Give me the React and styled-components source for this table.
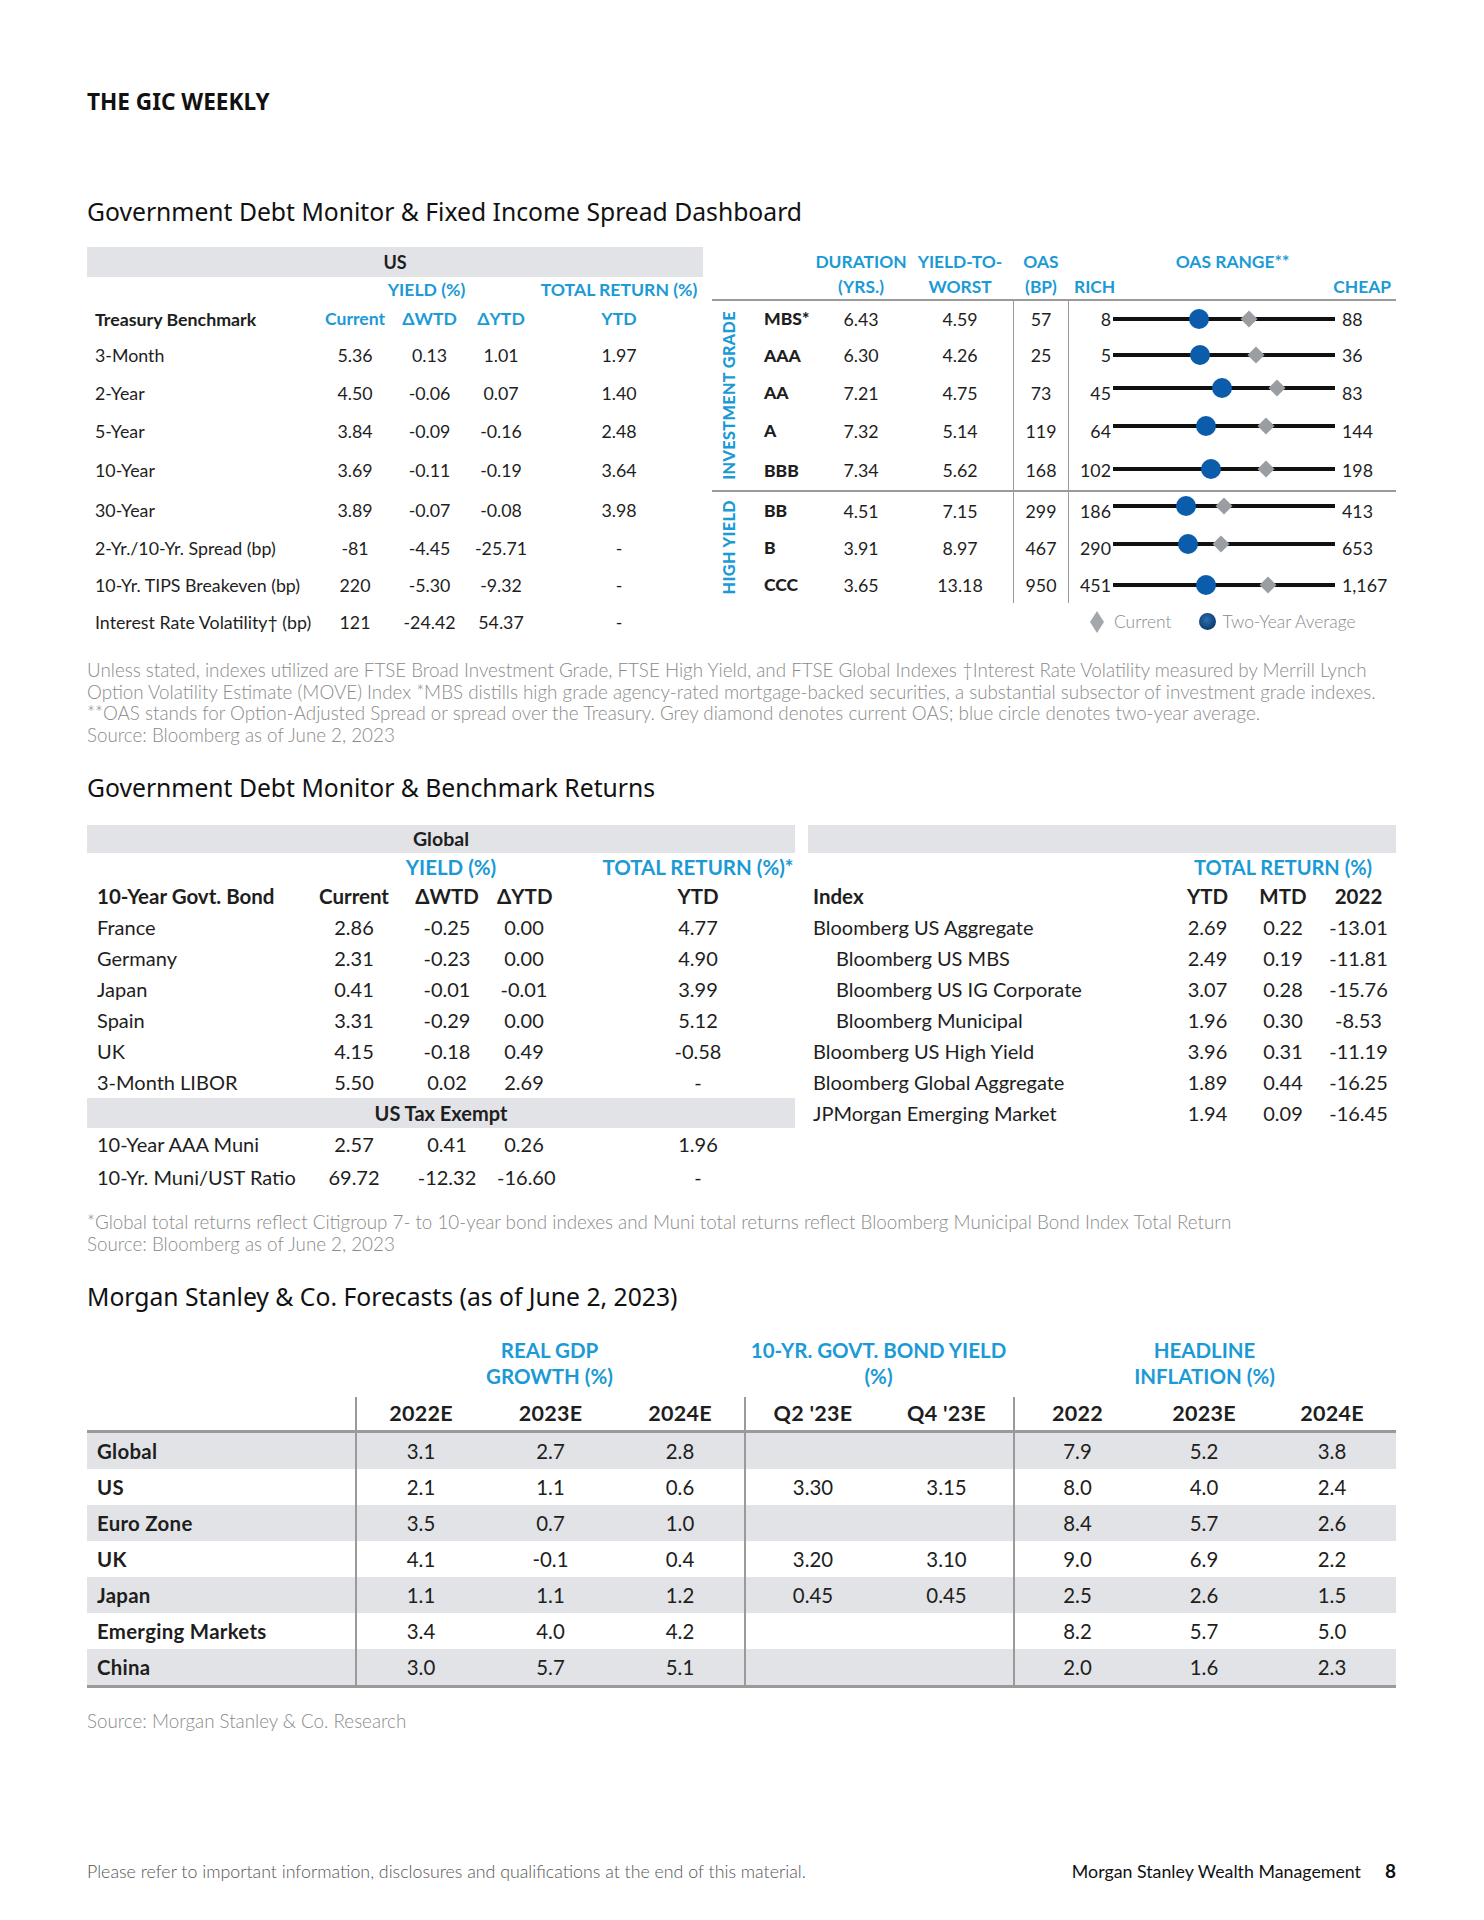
import React from "react";
import styled, { createGlobalStyle } from "styled-components";

const BLUE = "#1b9ad6";
const BAND = "#e2e3e6";
const RULE = "#9a9a9a";
const INK = "#1e1e1e";
const MUTED = "#8a8a8a";

const GlobalStyle = createGlobalStyle`
  html, body { margin: 0; padding: 0; background: #fff; }
  body { font-family: "Lato", "Noto Sans", sans-serif; color: ${INK}; }
`;

// ---- data ----
const usRows = [
  { label: "3-Month", cur: "5.36", wtd: "0.13", ytd: "1.01", tr: "1.97", h: 38 },
  { label: "2-Year", cur: "4.50", wtd: "-0.06", ytd: "0.07", tr: "1.40", h: 37 },
  { label: "5-Year", cur: "3.84", wtd: "-0.09", ytd: "-0.16", tr: "2.48", h: 39 },
  { label: "10-Year", cur: "3.69", wtd: "-0.11", ytd: "-0.19", tr: "3.64", h: 40 },
  { label: "30-Year", cur: "3.89", wtd: "-0.07", ytd: "-0.08", tr: "3.98", h: 39 },
  { label: "2-Yr./10-Yr. Spread (bp)", cur: "-81", wtd: "-4.45", ytd: "-25.71", tr: "-", h: 37 },
  { label: "10-Yr. TIPS Breakeven (bp)", cur: "220", wtd: "-5.30", ytd: "-9.32", tr: "-", h: 37 },
  { label: "Interest Rate Volatility† (bp)", cur: "121", wtd: "-24.42", ytd: "54.37", tr: "-", h: 37 },
];

const spreadGroups = [
  {
    name: "INVESTMENT GRADE",
    rows: [
      { label: "MBS*", dur: "6.43", ytw: "4.59", oas: 57, lo: 8, hi: 88, avg: 39, h: 35 },
      { label: "AAA", dur: "6.30", ytw: "4.26", oas: 25, lo: 5, hi: 36, avg: 17.2, h: 38 },
      { label: "AA", dur: "7.21", ytw: "4.75", oas: 73, lo: 45, hi: 83, avg: 63.7, h: 37, lift: 5 },
      { label: "A", dur: "7.32", ytw: "5.14", oas: 119, lo: 64, hi: 144, avg: 97.5, h: 39, lift: 5 },
      { label: "BBB", dur: "7.34", ytw: "5.62", oas: 168, lo: 102, hi: 198, avg: 144.4, h: 40, lift: 1 },
    ],
  },
  {
    name: "HIGH YIELD",
    rows: [
      { label: "BB", dur: "4.51", ytw: "7.15", oas: 299, lo: 186, hi: 413, avg: 260.6, h: 37, lift: 5 },
      { label: "B", dur: "3.91", ytw: "8.97", oas: 467, lo: 290, hi: 653, avg: 412.6, h: 37, lift: 4 },
      { label: "CCC", dur: "3.65", ytw: "13.18", oas: 950, lo: 451, hi: 1167, avg: 751, h: 37 },
    ],
  },
];

const globalRows = [
  ["France", "2.86", "-0.25", "0.00", "4.77"],
  ["Germany", "2.31", "-0.23", "0.00", "4.90"],
  ["Japan", "0.41", "-0.01", "-0.01", "3.99"],
  ["Spain", "3.31", "-0.29", "0.00", "5.12"],
  ["UK", "4.15", "-0.18", "0.49", "-0.58"],
  ["3-Month LIBOR", "5.50", "0.02", "2.69", "-"],
];

const muniRows = [
  ["10-Year AAA Muni", "2.57", "0.41", "0.26", "1.96"],
  ["10-Yr. Muni/UST Ratio", "69.72", "-12.32", "-16.60", "-"],
];

const indexRows = [
  { name: "Bloomberg US Aggregate", ytd: "2.69", mtd: "0.22", y22: "-13.01" },
  { name: "Bloomberg US MBS", ytd: "2.49", mtd: "0.19", y22: "-11.81", indent: true },
  { name: "Bloomberg US IG Corporate", ytd: "3.07", mtd: "0.28", y22: "-15.76", indent: true },
  { name: "Bloomberg Municipal", ytd: "1.96", mtd: "0.30", y22: "-8.53", indent: true },
  { name: "Bloomberg US High Yield", ytd: "3.96", mtd: "0.31", y22: "-11.19" },
  { name: "Bloomberg Global Aggregate", ytd: "1.89", mtd: "0.44", y22: "-16.25" },
  { name: "JPMorgan Emerging Market", ytd: "1.94", mtd: "0.09", y22: "-16.45" },
];

const forecastCols = ["2022E", "2023E", "2024E", "Q2 '23E", "Q4 '23E", "2022", "2023E", "2024E"];
const forecastRows = [
  ["Global", "3.1", "2.7", "2.8", "", "", "7.9", "5.2", "3.8"],
  ["US", "2.1", "1.1", "0.6", "3.30", "3.15", "8.0", "4.0", "2.4"],
  ["Euro Zone", "3.5", "0.7", "1.0", "", "", "8.4", "5.7", "2.6"],
  ["UK", "4.1", "-0.1", "0.4", "3.20", "3.10", "9.0", "6.9", "2.2"],
  ["Japan", "1.1", "1.1", "1.2", "0.45", "0.45", "2.5", "2.6", "1.5"],
  ["Emerging Markets", "3.4", "4.0", "4.2", "", "", "8.2", "5.7", "5.0"],
  ["China", "3.0", "5.7", "5.1", "", "", "2.0", "1.6", "2.3"],
];

const US_COLS = "231px 74px 75px 68px 168px";
const SPREAD_COLS = "70px 92px 106px 56px 327px";
const GLOBAL_COLS = "224px 86px 100px 54px 50px 194px";
const INDEX_COLS = "362px 75px 76px 75px";
const FORECAST_COLS = "268px 130px 131px 128px 136px 133px 127px 128px 128px";

// ---- layout ----
const Page = styled.div`
  width: 1484px;
  box-sizing: border-box;
  padding: 89px 88px 40px 87px;
`;

const Masthead = styled.h1`
  margin: 0;
  font-family: "Noto Sans", sans-serif;
  font-size: 22.6px;
  font-weight: 700;
  line-height: 26px;
  color: #111;
`;

const SectionTitle = styled.h2`
  margin: ${(p) => p.$mt}px 0 0;
  font-family: "Noto Sans", sans-serif;
  font-size: 24.7px;
  font-weight: 400;
  line-height: 32px;
  color: #111;
`;

const Notes = styled.div`
  margin-top: ${(p) => p.$mt}px;
  font-size: 18.8px;
  font-weight: 300;
  line-height: ${(p) => p.$lh || 21.7}px;
  color: ${MUTED};
  white-space: nowrap;
`;

const Band = styled.div`
  height: ${(p) => p.$h}px;
  background: ${BAND};
  display: flex;
  align-items: center;
  justify-content: center;
  font-weight: 700;
  font-size: ${(p) => p.$fs || 18}px;
`;

const TRow = styled.div`
  display: grid;
  grid-template-columns: ${(p) => p.$cols};
  height: ${(p) => p.$h}px;
  align-items: center;
  font-size: ${(p) => p.$fs || 17.8}px;
  background: ${(p) => (p.$shade ? BAND : "transparent")};
`;

const Cell = styled.div`
  grid-column: span ${(p) => p.$span || 1};
  text-align: ${(p) => p.$align || "center"};
  padding-left: ${(p) => p.$pl || 0}px;
  font-weight: ${(p) => (p.$bold ? 700 : 400)};
  white-space: nowrap;
`;

const BlueHead = styled(Cell)`
  color: ${BLUE};
  font-weight: 700;
  font-size: ${(p) => p.$fs || 17.6}px;
`;

// ---- dashboard ----
const Dashboard = styled.div`
  display: flex;
  gap: 9px;
  margin-top: 19px;
`;

const UsTable = styled.div`
  width: 616px;
`;

const SpreadTable = styled.div`
  width: 684px;
`;

const SpreadHead = styled.div`
  display: grid;
  grid-template-columns: 33px ${SPREAD_COLS};
  grid-template-rows: 25px 25px;
  padding-top: 2px;
  border-bottom: 2px solid ${RULE};
  color: ${BLUE};
  font-weight: 700;
  font-size: 17.4px;
  align-items: center;
  text-align: center;
  white-space: nowrap;
`;

const HeadCell = styled.div`
  grid-column: ${(p) => p.$col};
  grid-row: ${(p) => p.$row};
  text-align: ${(p) => p.$align || "center"};
  padding: 0 ${(p) => p.$pr || 0}px 0 ${(p) => p.$pl || 0}px;
`;

const Group = styled.div`
  display: flex;
  border-top: ${(p) => (p.$divider ? `2px solid ${RULE}` : "none")};
`;

const GroupLabel = styled.div`
  width: 33px;
  display: flex;
  align-items: center;
  justify-content: center;
  span {
    writing-mode: vertical-rl;
    transform: rotate(180deg);
    color: ${BLUE};
    font-weight: 900;
    font-size: 16.2px;
    letter-spacing: 0.4px;
    white-space: nowrap;
  }
`;

const GroupRows = styled.div`
  flex: 1;
`;

const Rating = styled(Cell)`
  font-weight: 900;
  font-size: 17.5px;
  text-align: left;
  padding-left: 19px;
`;

const OasCell = styled(Cell)`
  height: 100%;
  box-sizing: border-box;
  display: flex;
  align-items: center;
  justify-content: center;
  border-left: 1.5px solid ${RULE};
  border-right: 1.5px solid ${RULE};
`;

const Range = styled.div`
  display: grid;
  grid-template-columns: 44px 222px 1fr;
  align-items: center;
`;

const RangeLo = styled.span`
  text-align: right;
  padding-right: 2px;
`;

const RangeHi = styled.span`
  padding-left: 7px;
`;

const Track = styled.div`
  position: relative;
  height: 4px;
  background: #111;
  transform: translateY(${(p) => -(p.$lift || 0)}px);
`;

const AvgDot = styled.span`
  position: absolute;
  top: 50%;
  width: 20px;
  height: 20px;
  border-radius: 50%;
  background: #0b5cab;
  transform: translate(-50%, -50%);
`;

const NowDiamond = styled.span`
  position: absolute;
  top: 50%;
  width: 12px;
  height: 12px;
  background: #9a9da2;
  transform: translate(-50%, -50%) rotate(45deg);
`;

const Legend = styled.div`
  height: 37px;
  display: flex;
  align-items: center;
  padding-left: 378px;
  color: ${MUTED};
  font-size: 17.4px;
  font-weight: 300;
`;

const LegendText = styled.span`
  margin-left: ${(p) => p.$ml}px;
`;

// ---- benchmark section ----
const Benchmarks = styled.div`
  display: flex;
  gap: 13px;
  margin-top: 21px;
`;

const GlobalTable = styled.div`
  width: 708px;
`;

const IndexTable = styled.div`
  width: 588px;
`;

// ---- forecasts ----
const Forecast = styled.div`
  margin-top: 24px;
  border-bottom: 3px solid ${RULE};
`;

const ForecastGroupHead = styled(Cell)`
  color: ${BLUE};
  font-weight: 700;
  font-size: 20.5px;
  line-height: 26px;
  white-space: pre;
  align-self: start;
`;

const ForecastHeadRow = styled(TRow)`
  border-bottom: 3px solid ${RULE};
  font-weight: 700;
`;

const FCell = styled(Cell)`
  height: 100%;
  display: flex;
  align-items: center;
  justify-content: ${(p) => (p.$align === "left" ? "flex-start" : "center")};
  box-sizing: border-box;
  border-left: ${(p) => (p.$rule ? `2px solid ${RULE}` : "none")};
  letter-spacing: ${(p) => (p.$bold ? 0.3 : 0)}px;
`;

const Footer = styled.div`
  margin-top: 128px;
  display: flex;
  justify-content: space-between;
  align-items: center;
  line-height: 22px;
  font-size: 17.8px;
`;

const FooterNote = styled.span`
  color: #555;
  font-weight: 300;
`;

const FooterBrand = styled.span`
  display: flex;
  gap: 24px;
  color: #111;
  b {
    font-weight: 700;
    font-size: 19px;
  }
`;

function OasRange({ row }) {
  const pos = (v) => `${((v - row.lo) / (row.hi - row.lo)) * 100}%`;
  return (
    <Range>
      <RangeLo>{row.lo}</RangeLo>
      <Track $lift={row.lift}>
        <AvgDot style={{ left: pos(row.avg) }} />
        <NowDiamond style={{ left: pos(row.oas) }} />
      </Track>
      <RangeHi>{row.hi.toLocaleString("en-US")}</RangeHi>
    </Range>
  );
}

function SpreadDashboard() {
  return (
    <SpreadTable>
      <SpreadHead>
        <HeadCell $col={3} $row={1}>DURATION</HeadCell>
        <HeadCell $col={3} $row={2}>(YRS.)</HeadCell>
        <HeadCell $col={4} $row={1}>YIELD-TO-</HeadCell>
        <HeadCell $col={4} $row={2}>WORST</HeadCell>
        <HeadCell $col={5} $row={1}>OAS</HeadCell>
        <HeadCell $col={5} $row={2}>(BP)</HeadCell>
        <HeadCell $col={6} $row={1}>OAS RANGE**</HeadCell>
        <HeadCell $col={6} $row={2} $align="left" $pl={5}>RICH</HeadCell>
        <HeadCell $col={6} $row={2} $align="right" $pr={5}>CHEAP</HeadCell>
      </SpreadHead>
      {spreadGroups.map((g, gi) => (
        <Group key={g.name} $divider={gi > 0}>
          <GroupLabel>
            <span>{g.name}</span>
          </GroupLabel>
          <GroupRows>
            {g.rows.map((r) => (
              <TRow key={r.label} $cols={SPREAD_COLS} $h={r.h}>
                <Rating>{r.label}</Rating>
                <Cell>{r.dur}</Cell>
                <Cell>{r.ytw}</Cell>
                <OasCell>{r.oas}</OasCell>
                <OasRange row={r} />
              </TRow>
            ))}
          </GroupRows>
        </Group>
      ))}
      <Legend>
        <svg width="14" height="22" viewBox="0 0 14 22">
          <polygon points="7,0 14,11 7,22 0,11" fill="#a3a6aa" />
        </svg>
        <LegendText $ml={10}>Current</LegendText>
        <svg width="17" height="17" viewBox="0 0 17 17" style={{ marginLeft: 28 }}>
          <defs>
            <radialGradient id="avgdot" cx="45%" cy="40%" r="60%">
              <stop offset="0%" stopColor="#2f6fae" />
              <stop offset="100%" stopColor="#0b3a6e" />
            </radialGradient>
          </defs>
          <circle cx="8.5" cy="8.5" r="8.5" fill="url(#avgdot)" />
        </svg>
        <LegendText $ml={6}>Two-Year Average</LegendText>
      </Legend>
    </SpreadTable>
  );
}

function TreasuryTable() {
  return (
    <UsTable>
      <Band $h={30}>US</Band>
      <TRow $cols={US_COLS} $h={24}>
        <Cell />
        <BlueHead $span={3}>YIELD (%)</BlueHead>
        <BlueHead>TOTAL RETURN (%)</BlueHead>
      </TRow>
      <TRow $cols={US_COLS} $h={35}>
        <Cell $align="left" $pl={8} $bold>Treasury Benchmark</Cell>
        <BlueHead>Current</BlueHead>
        <BlueHead>ΔWTD</BlueHead>
        <BlueHead>ΔYTD</BlueHead>
        <BlueHead>YTD</BlueHead>
      </TRow>
      {usRows.map((r) => (
        <TRow key={r.label} $cols={US_COLS} $h={r.h}>
          <Cell $align="left" $pl={8}>{r.label}</Cell>
          <Cell>{r.cur}</Cell>
          <Cell>{r.wtd}</Cell>
          <Cell>{r.ytd}</Cell>
          <Cell>{r.tr}</Cell>
        </TRow>
      ))}
    </UsTable>
  );
}

function GlobalBonds() {
  const line = (r, h) => (
    <TRow key={r[0]} $cols={GLOBAL_COLS} $h={h} $fs={20}>
      <Cell $align="left" $pl={10}>{r[0]}</Cell>
      <Cell>{r[1]}</Cell>
      <Cell>{r[2]}</Cell>
      <Cell>{r[3]}</Cell>
      <Cell />
      <Cell>{r[4]}</Cell>
    </TRow>
  );
  return (
    <GlobalTable>
      <Band $h={28} $fs={19.5}>Global</Band>
      <TRow $cols={GLOBAL_COLS} $h={28}>
        <Cell />
        <BlueHead $span={3} $pl={40} $fs={20.5}>YIELD (%)</BlueHead>
        <Cell />
        <BlueHead $fs={20.5}>TOTAL RETURN (%)*</BlueHead>
      </TRow>
      <TRow $cols={GLOBAL_COLS} $h={31} $fs={20.5}>
        <Cell $align="left" $pl={10} $bold>10-Year Govt. Bond</Cell>
        <Cell $bold>Current</Cell>
        <Cell $bold>ΔWTD</Cell>
        <Cell $bold>ΔYTD</Cell>
        <Cell />
        <Cell $bold>YTD</Cell>
      </TRow>
      {globalRows.map((r) => line(r, 31))}
      <Band $h={30} $fs={20}>US Tax Exempt</Band>
      {muniRows.map((r) => line(r, 33))}
    </GlobalTable>
  );
}

function IndexReturns() {
  return (
    <IndexTable>
      <Band $h={28} />
      <TRow $cols={INDEX_COLS} $h={28}>
        <Cell />
        <BlueHead $span={3} $fs={20}>TOTAL RETURN (%)</BlueHead>
      </TRow>
      <TRow $cols={INDEX_COLS} $h={31} $fs={20.5}>
        <Cell $align="left" $pl={5} $bold>Index</Cell>
        <Cell $bold>YTD</Cell>
        <Cell $bold>MTD</Cell>
        <Cell $bold>2022</Cell>
      </TRow>
      {indexRows.map((r) => (
        <TRow key={r.name} $cols={INDEX_COLS} $h={31} $fs={20}>
          <Cell $align="left" $pl={r.indent ? 28 : 5}>{r.name}</Cell>
          <Cell>{r.ytd}</Cell>
          <Cell>{r.mtd}</Cell>
          <Cell>{r.y22}</Cell>
        </TRow>
      ))}
    </IndexTable>
  );
}

function Forecasts() {
  const ruled = (i) => i === 1 || i === 4 || i === 6;
  return (
    <Forecast>
      <TRow $cols={FORECAST_COLS} $h={60}>
        <Cell />
        <ForecastGroupHead $span={3}>{"REAL GDP\nGROWTH (%)"}</ForecastGroupHead>
        <ForecastGroupHead $span={2}>{"10-YR. GOVT. BOND YIELD\n(%)"}</ForecastGroupHead>
        <ForecastGroupHead $span={3}>{"HEADLINE\nINFLATION (%)"}</ForecastGroupHead>
      </TRow>
      <ForecastHeadRow $cols={FORECAST_COLS} $h={33} $fs={21.5}>
        <FCell />
        {forecastCols.map((c, i) => (
          <FCell key={i} $rule={ruled(i + 1)} $bold>
            {c}
          </FCell>
        ))}
      </ForecastHeadRow>
      {forecastRows.map((r, ri) => (
        <TRow key={r[0]} $cols={FORECAST_COLS} $h={36} $fs={20.4} $shade={ri % 2 === 0}>
          <FCell $align="left" $pl={10} $bold>{r[0]}</FCell>
          {r.slice(1).map((v, i) => (
            <FCell key={i} $rule={ruled(i + 1)}>{v}</FCell>
          ))}
        </TRow>
      ))}
    </Forecast>
  );
}

export default function App() {
  return (
    <>
      <GlobalStyle />
      <Page>
        <Masthead>THE GIC WEEKLY</Masthead>
        <SectionTitle $mt={81}>Government Debt Monitor &amp; Fixed Income Spread Dashboard</SectionTitle>
        <Dashboard>
          <TreasuryTable />
          <SpreadDashboard />
        </Dashboard>
        <Notes $mt={19}>
          <div>
            Unless stated, indexes utilized are FTSE Broad Investment Grade, FTSE High Yield, and FTSE Global Indexes †Interest Rate Volatility measured by Merrill Lynch
          </div>
          <div>
            Option Volatility Estimate (MOVE) Index *MBS distills high grade agency-rated mortgage-backed securities, a substantial subsector of investment grade indexes.
          </div>
          <div>
            **OAS stands for Option-Adjusted Spread or spread over the Treasury. Grey diamond denotes current OAS; blue circle denotes two-year average.
          </div>
          <div>Source: Bloomberg as of June 2, 2023</div>
        </Notes>
        <SectionTitle $mt={26}>Government Debt Monitor &amp; Benchmark Returns</SectionTitle>
        <Benchmarks>
          <GlobalBonds />
          <IndexReturns />
        </Benchmarks>
        <Notes $mt={17} $lh={22}>
          <div>
            *Global total returns reflect Citigroup 7- to 10-year bond indexes and Muni total returns reflect Bloomberg Municipal Bond Index Total Return
          </div>
          <div>Source: Bloomberg as of June 2, 2023</div>
        </Notes>
        <SectionTitle $mt={26}>Morgan Stanley &amp; Co. Forecasts (as of June 2, 2023)</SectionTitle>
        <Forecasts />
        <Notes $mt={22} $lh={22}>
          <div>Source: Morgan Stanley &amp; Co. Research</div>
        </Notes>
        <Footer>
          <FooterNote>Please refer to important information, disclosures and qualifications at the end of this material.</FooterNote>
          <FooterBrand>
            <span>Morgan Stanley Wealth Management</span>
            <b>8</b>
          </FooterBrand>
        </Footer>
      </Page>
    </>
  );
}
